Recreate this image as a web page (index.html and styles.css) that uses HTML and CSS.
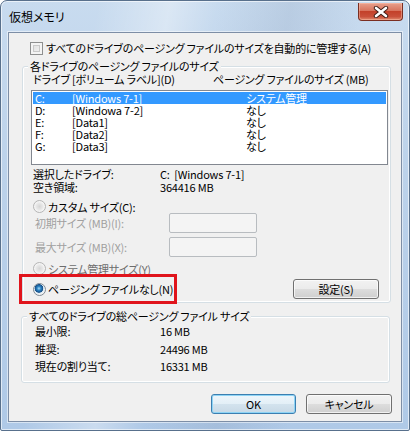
FILE: index.html
```html
<!DOCTYPE html>
<html lang="ja">
<head>
<meta charset="utf-8">
<title>仮想メモリ</title>
<link rel="stylesheet" href="styles.css">
</head>
<body>
<div class="window">
  <div class="titlebar">
    <span class="title">仮想メモリ</span>
    <button class="close" aria-label="閉じる">
      <svg width="16" height="12" viewBox="0 0 16 12"><path d="M3 2 L13 10 M13 2 L3 10" stroke="#3a1a14" stroke-width="4.4" stroke-linecap="round"/><path d="M3 2 L13 10 M13 2 L3 10" stroke="#ffffff" stroke-width="2.6" stroke-linecap="round"/></svg>
    </button>
  </div>
  <div class="client">
    <div class="auto-row"><span class="checkbox"></span><span>すべてのドライブのページング ファイルのサイズを自動的に管理する(A)</span></div>

    <div class="group g1">
      <div class="group-title">各ドライブのページング ファイルのサイズ</div>
      <div class="list-head"><span class="col-a">ドライブ [ボリューム ラベル](D)</span><span>ページング ファイルのサイズ (MB)</span></div>
      <div class="listbox">
        <div class="row sel"><span class="c1">C:</span><span class="c2">[Windows 7-1]</span><span>システム管理</span></div>
        <div class="row"><span class="c1">D:</span><span class="c2">[Windowa 7-2]</span><span>なし</span></div>
        <div class="row"><span class="c1">E:</span><span class="c2">[Data1]</span><span>なし</span></div>
        <div class="row"><span class="c1">F:</span><span class="c2">[Data2]</span><span>なし</span></div>
        <div class="row"><span class="c1">G:</span><span class="c2">[Data3]</span><span>なし</span></div>
      </div>
      <div class="info">
        <div class="info-row"><span class="info-label">選択したドライブ:</span><span>C:&nbsp;&nbsp;[Windows 7-1]</span></div>
        <div class="info-row"><span class="info-label">空き領域:</span><span>364416 MB</span></div>
      </div>
      <div class="radio-row custom"><span class="radio"></span><span>カスタム サイズ(C):</span></div>
      <div class="field-row first"><span class="field-label">初期サイズ (MB)(I):</span><span class="input"></span></div>
      <div class="field-row"><span class="field-label">最大サイズ (MB)(X):</span><span class="input"></span></div>
      <div class="radio-row system"><span class="radio"></span><span class="dim">システム管理サイズ(Y)</span></div>
      <div class="radio-row none"><span class="radio checked"></span><span>ページング ファイルなし(N)</span><button class="btn set">設定(S)</button></div>
      <div class="annotation"></div>
    </div>

    <div class="group g2">
      <div class="group-title">すべてのドライブの総ページング ファイル サイズ</div>
      <div class="total-row t1"><span class="total-label">最小限:</span><span>16 MB</span></div>
      <div class="total-row t2"><span class="total-label">推奨:</span><span>24496 MB</span></div>
      <div class="total-row t3"><span class="total-label">現在の割り当て:</span><span>16331 MB</span></div>
    </div>

    <div class="buttons">
      <button class="btn ok">OK</button>
      <button class="btn cancel">キャンセル</button>
    </div>
  </div>
</div>
</body>
</html>
```

FILE: styles.css
```css
* { box-sizing: border-box; }
html, body { margin: 0; padding: 0; background: #ffffff; }
body {
  font-family: "Noto Sans CJK JP", "Liberation Sans", sans-serif;
  font-size: 11px;
  font-feature-settings: "palt";
  letter-spacing: -0.2px;
  color: #000;
  white-space: nowrap;
}
.window {
  width: 410px;
  height: 431px;
  padding: 0 7px 8px 7px;
  border: 1px solid #58708c;
  border-radius: 7px 7px 2px 2px;
  background:
    linear-gradient(100deg, rgba(255,255,255,0) 20%, rgba(255,255,255,0.35) 35%, rgba(255,255,255,0) 45%, rgba(120,140,170,0.18) 60%, rgba(255,255,255,0) 75%),
    linear-gradient(to bottom, #c8dbef 0%, #bcd2ea 40%, #afc9e7 100%);
  box-shadow: inset 0 0 0 1px rgba(255,255,255,0.6);
}
.titlebar {
  height: 31px;
  display: flex;
  align-items: flex-start;
  justify-content: space-between;
}
.title {
  margin: 8px 0 0 1px;
  line-height: 16px;
  font-size: 12px;
  letter-spacing: 0;
  color: #000;
}
.close {
  margin: 2px -1px 0 0;
  width: 45px;
  height: 18px;
  padding: 0;
  border: 1px solid #7a2e22;
  border-top: none;
  border-radius: 0 0 4px 4px;
  background: linear-gradient(to bottom, #e8a08c 0%, #d8745e 45%, #c3412a 50%, #c9503a 80%, #e08a6e 100%);
  box-shadow: inset 0 0 0 1px rgba(255,200,180,0.45);
  display: flex;
  align-items: center;
  justify-content: center;
}
.close svg { display: block; }
.client {
  height: 390px;
  background: #f0f0f0;
  border: 1px solid #7d8ea6;
  box-shadow: 0 0 0 1px rgba(255,255,255,0.5);
}
.auto-row {
  margin: 9px 0 0 21px;
  height: 13px;
  line-height: 13px;
  display: flex;
  align-items: center;
  gap: 3px;
}
.checkbox {
  width: 13px;
  height: 13px;
  border: 1px solid #8e8f8f;
  background: linear-gradient(135deg, #dcdcdc, #f6f6f6);
  box-shadow: inset 0 0 0 2px #f4f4f4, inset 0 0 0 3px #c9c9c9;
  flex: none;
}
.group {
  position: relative;
  border: 1px solid #d5dfe5;
  border-radius: 3px;
  box-shadow: inset 0 0 0 1px #ffffff;
  width: 369px;
}
.group-title {
  display: table;
  margin: -8px 0 0 5px;
  padding: 0 2px;
  line-height: 14px;
  background: #f0f0f0;
}
.g1 {
  margin: 11px 0 0 13px;
  height: 237px;
}
.list-head {
  padding-left: 10px;
  line-height: 12px;
  height: 12px;
  display: flex;
}
.col-a { width: 180px; }
.listbox {
  margin: 5px 0 0 8px;
  width: 357px;
  height: 75px;
  border: 1px solid #828790;
  background: #ffffff;
  padding-top: 1px;
}
.row {
  margin: 0 1px;
  padding-left: 2px;
  height: 12px;
  line-height: 12px;
  display: flex;
}
.row.sel { background: #3399ff; color: #ffffff; }
.c1 { width: 37px; }
.c2 { width: 174px; }
.info { margin: 3px 0 0 10px; }
.info-row { display: flex; line-height: 13px; height: 13px; }
.info-label { width: 127px; }
.radio-row {
  display: flex;
  align-items: center;
  margin-left: 10px;
  gap: 2px;
  height: 13px;
}
.radio-row.custom { margin-top: 6px; }
.radio-row.system { margin-top: 5px; }
.radio-row.none { margin-top: 4px; height: 20px; }
.radio {
  width: 13px;
  height: 13px;
  border-radius: 50%;
  border: 1px solid #b5b5b5;
  background: radial-gradient(circle at 50% 50%, #d6d6d6 0, #e6e6e6 3px, #f4f4f4 5px);
  flex: none;
}
.radio.checked {
  border-color: #7f8a94;
  background: radial-gradient(circle at 45% 40%, #a9dcf7 0, #2a83c3 2px, #174f88 4px, #d8e8f2 4.6px, #f4f4f4 6px);
}
.dim { color: #6d6d6d; }
.field-row {
  display: flex;
  align-items: center;
  margin-left: 12px;
  height: 20px;
  margin-top: 4px;
}
.field-row.first { margin-top: 0; }
.field-label { width: 134px; color: #a0a0a0; }
.input {
  width: 88px;
  height: 20px;
  border: 1px solid #b8bcc0;
  border-radius: 2px;
  background: #f4f4f4;
}
.btn {
  font: inherit;
  font-feature-settings: "palt";
  letter-spacing: -0.2px;
  color: #000;
  height: 20px;
  padding: 0;
  border: 1px solid #707070;
  border-radius: 3px;
  background: linear-gradient(to bottom, #f2f2f2 0%, #ebebeb 50%, #dddddd 51%, #cfcfcf 100%);
  box-shadow: inset 0 0 0 1px rgba(255,255,255,0.7);
  line-height: 18px;
}
.btn.set { width: 86px; margin: 0 11px 0 auto; height: 20px; }
.annotation {
  position: absolute;
  left: -4px;
  top: 207px;
  width: 158px;
  height: 30px;
  border: 3px solid #e0141c;
}
.g2 {
  margin: 13px 0 0 12px;
  height: 67px;
}
.total-row { display: flex; margin-left: 13px; line-height: 13px; height: 13px; }
.total-label { width: 125px; }
.t1 { margin-top: 2px; }
.t2 { margin-top: 5px; }
.t3 { margin-top: 4px; }
.buttons {
  margin-top: 11px;
  display: flex;
  justify-content: flex-end;
  gap: 10px;
  padding-right: 9px;
}
.btn.ok {
  width: 85px;
  border-color: #3c7fb1;
  box-shadow: inset 0 0 0 1px #8ed4f5;
  background: linear-gradient(to bottom, #eef6fb 0%, #e3eff7 50%, #d3e3ee 51%, #c8d9e6 100%);
}
.btn.cancel { width: 86px; }
```
